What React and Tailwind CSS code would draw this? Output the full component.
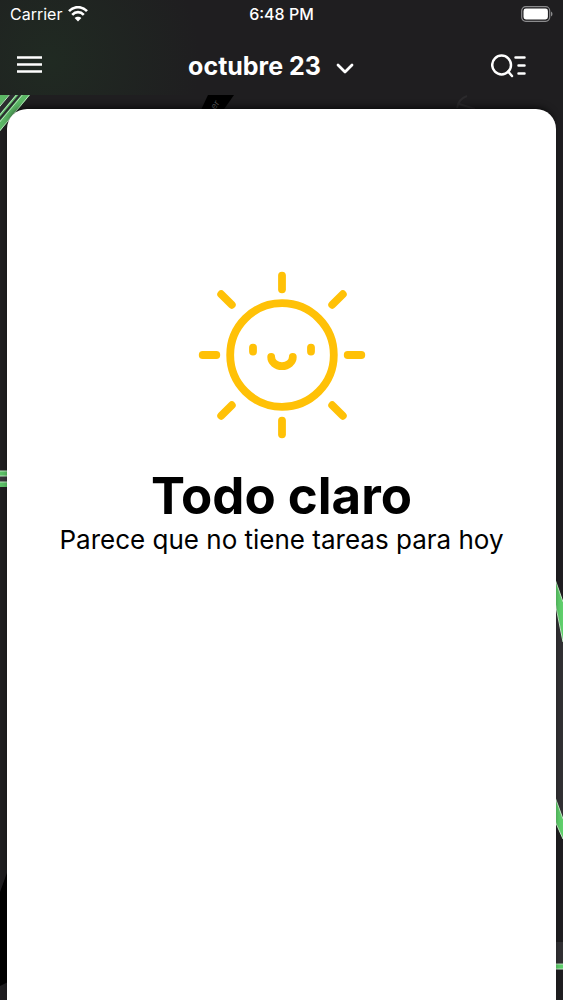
const RAY_ANGLES = [0, 45, 90, 135, 180, 225, 270, 315];

function Backdrop() {
    return (
        <svg
            className="absolute inset-0 h-full w-full"
            viewBox="0 0 563 1000"
            preserveAspectRatio="none"
            aria-hidden="true"
        >
            {/* top left stripes */}
            <path d="M0 95H30L0 131Z" fill="#5cb866" />
            <path d="M14 93L-2 112" stroke="#2b2b30" strokeWidth="5" />
            <path d="M11 93L-2 108.5M18 93L-2 117M24 93L-2 124M31 93L-2 133" stroke="#b9e6bd" strokeWidth="1" />
            <path d="M21.5 93L-2 121" stroke="#2b2b30" strokeWidth="2" />

            {/* black tag under the header */}
            <path d="M208 95H234L222 112H200Z" fill="#000000" />
            <text x="215" y="110" fontSize="9" fill="#5a5a5a" transform="rotate(-55 215 110)">er</text>
            <path d="M457 108C458 102 461 98 467 96M459 104L475 109" stroke="#2b2a2c" strokeWidth="2" fill="none" />

            {/* left edge */}
            <path d="M0 471H8V476H0ZM0 482H8V487H0Z" fill="#5cc168" />
            <path d="M0 476H8V482H0Z" fill="#37353b" />
            <path d="M0 471H8M0 476H8M0 482H8" stroke="#b9e6bd" strokeWidth="1" />
            <path d="M8 870L0 892V986L8 982Z" fill="#000000" />

            {/* right edge */}
            <path d="M555 600L563 640V822L555 798Z" fill="#313033" />
            <path d="M555 579L563 602V642L555 602Z" fill="#5fcf6b" />
            <path d="M555 797L563 819V839L555 821Z" fill="#5fcf6b" />
            <path d="M555 579L563 602M555 602L563 642M555 797L563 819M555 821L563 839" stroke="#c4e8c7" strokeWidth="1" />
            <path d="M555 942H563V963H555Z" fill="#313033" />
            <path d="M555 964H563V969H555Z" fill="#5fcf6b" />
            <path d="M555 964H563M555 969H563" stroke="#c4e8c7" strokeWidth="1" />
        </svg>
    );
}

function StatusBar() {
    return (
        <div className="grid h-7 grid-cols-3 items-center px-2.5 text-base leading-5">
            <div className="flex items-center gap-1.5">
                <span>Carrier</span>
                <svg className="h-4 w-5" viewBox="0 0 20 16" fill="none" stroke="currentColor" aria-hidden="true">
                    <path d="M1 5.2C6 -0.2 14 -0.2 19 5.2" strokeWidth="2.6" />
                    <path d="M4.2 8.8C7.6 5.2 12.4 5.2 15.8 8.8" strokeWidth="2.6" />
                    <path d="M10 15.4L6.6 12C8.4 10.2 11.6 10.2 13.4 12Z" fill="currentColor" stroke="none" />
                </svg>
            </div>
            <span className="text-center font-medium">6:48 PM</span>
            <svg className="h-4 w-8 justify-self-end" viewBox="0 0 32 16" fill="none" aria-hidden="true">
                <rect x="0.7" y="0.7" width="28" height="14.6" rx="4" stroke="#8b8b8d" strokeWidth="1.2" />
                <rect x="2.5" y="2.5" width="24.4" height="11" rx="2.4" fill="#ffffff" />
                <path d="M30 5.5C32 6.5 32 9.5 30 10.5Z" fill="#8b8b8d" />
            </svg>
        </div>
    );
}

function Header() {
    return (
        <header className="relative bg-[#1f1e20] bg-[radial-gradient(circle_150px_at_50px_60px,#202a22,#1f1e20)] text-white">
            <StatusBar />
            <div className="grid h-[67px] grid-cols-[1fr_auto_1fr] items-center px-4 pt-2">
                <button type="button" aria-label="Menú" className="justify-self-start">
                    <svg className="h-7 w-7" viewBox="0 0 28 28" stroke="currentColor" strokeWidth="2.4" aria-hidden="true">
                        <path d="M1 5.5H26M1 12.5H26M1 19.5H26" />
                    </svg>
                </button>
                <button type="button" className="mr-5 flex items-center gap-3.5 text-[25px] leading-8 font-bold">
                    <span>octubre 23</span>
                    <svg
                        className="mt-1 h-5 w-5"
                        viewBox="0 0 20 20"
                        fill="none"
                        stroke="currentColor"
                        strokeWidth="2.8"
                        strokeLinecap="round"
                        strokeLinejoin="round"
                        aria-hidden="true"
                    >
                        <path d="M3 7L10 14L17 7" />
                    </svg>
                </button>
                <button type="button" aria-label="Buscar" className="mr-5 justify-self-end">
                    <svg
                        className="h-6 w-9"
                        viewBox="0 0 36 24"
                        fill="none"
                        stroke="currentColor"
                        strokeWidth="2.5"
                        strokeLinecap="round"
                        aria-hidden="true"
                    >
                        <circle cx="10.6" cy="11" r="9.4" />
                        <path d="M17.1 17.5L21 22M24.5 3.5H33.5M27.5 11.5H33.5M27.5 19.5H33.5" />
                    </svg>
                </button>
            </div>
        </header>
    );
}

function SunIcon() {
    return (
        <svg
            className="h-[168px] w-[168px]"
            viewBox="0 0 168 168"
            fill="none"
            stroke="#ffc107"
            strokeWidth="7.8"
            strokeLinecap="round"
            aria-hidden="true"
        >
            <circle cx="84" cy="84" r="51.8" />
            {RAY_ANGLES.map((angle) => (
                <path key={angle} d={angle % 90 ? 'M84 -2V13' : 'M84 4.7V18.3'} transform={`rotate(${angle} 84 84)`} />
            ))}
            <path d="M55 76.6V80.6M113 76.6V80.6" />
            <path d="M73.2 86A10.8 9.2 0 0 0 94.8 86" />
        </svg>
    );
}

export default function App() {
    return (
        <div className="relative flex min-h-screen flex-col bg-[#1f1e20] font-['Inter',sans-serif]">
            <Backdrop />
            <Header />
            <main className="relative mx-[7px] mt-3.5 flex flex-1 flex-col items-center rounded-t-[20px] bg-white px-4 pt-[162px] text-center text-black shadow-[0_-4px_8px_-4px_#000000]">
                <SunIcon />
                <h1 className="mt-[27px] text-[51px] leading-[60px] font-bold">Todo claro</h1>
                <p className="text-[26px] leading-7">Parece que no tiene tareas para hoy</p>
            </main>
        </div>
    );
}
